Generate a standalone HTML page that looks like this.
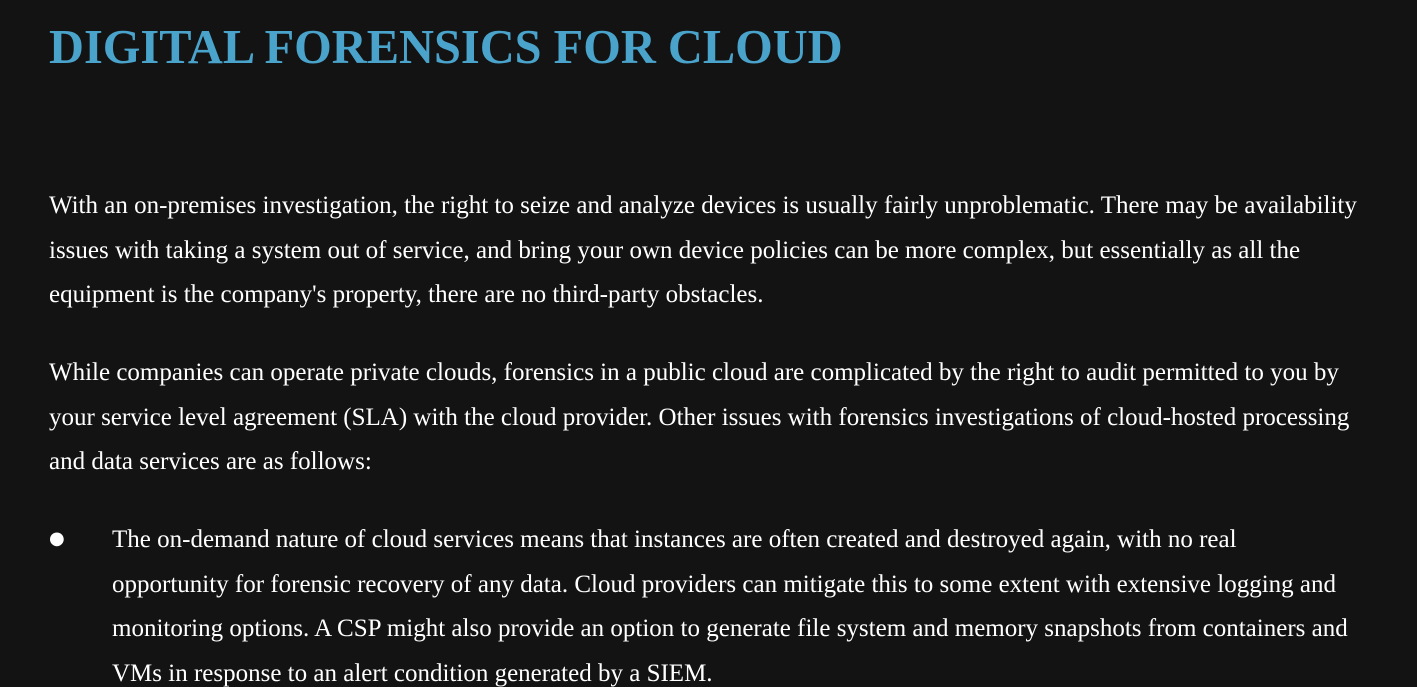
<!DOCTYPE html>
<html><head><meta charset="utf-8"><style>
html,body{margin:0;background:#131313;width:1417px;height:687px;overflow:hidden}
body{padding:20px 0 0 49px;box-sizing:border-box;font-family:"Liberation Serif",serif;color:#fff}
h1{margin:0;font-size:48.4px;line-height:56px;color:#4aa3cb;font-weight:bold}
p{margin:0;font-size:25px;line-height:44.5px;white-space:nowrap}
p.first{margin-top:108px}
p+p{margin-top:33.5px}
.li{position:relative;padding-left:63px}
.li:before{content:"\25CF";position:absolute;left:0;top:-1px;font-size:18px;font-family:"DejaVu Sans",sans-serif}
</style></head><body>
<h1>DIGITAL FORENSICS FOR CLOUD</h1>
<p class="first">With an on-premises investigation, the right to seize and analyze devices is usually fairly unproblematic. There may be availability<br>issues with taking a system out of service, and bring your own device policies can be more complex, but essentially as all the<br>equipment is the company's property, there are no third-party obstacles.</p>
<p>While companies can operate private clouds, forensics in a public cloud are complicated by the right to audit permitted to you by<br>your service level agreement (SLA) with the cloud provider. Other issues with forensics investigations of cloud-hosted processing<br>and data services are as follows:</p>
<p class="li">The on-demand nature of cloud services means that instances are often created and destroyed again, with no real<br>opportunity for forensic recovery of any data. Cloud providers can mitigate this to some extent with extensive logging and<br>monitoring options. A CSP might also provide an option to generate file system and memory snapshots from containers and<br>VMs in response to an alert condition generated by a SIEM.</p>
</body></html>
